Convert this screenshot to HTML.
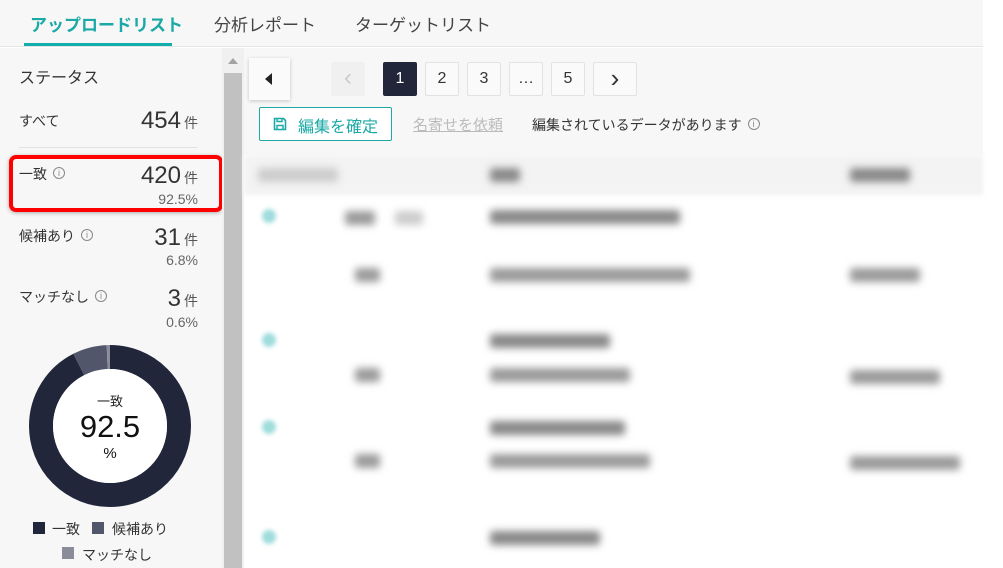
<!DOCTYPE html>
<html><head><meta charset="utf-8"><style>
*{margin:0;padding:0;box-sizing:border-box}
body{width:1003px;height:568px;overflow:hidden;background:#fff;font-family:"Liberation Sans","Noto Sans CJK JP",sans-serif;color:#333;position:relative}
.abs{position:absolute}
.tabs{left:0;top:0;width:983px;height:47px;background:#f7f7f7;border-bottom:1px solid #e4e4e4}
.tab{position:absolute;top:11px;font-size:17px;color:#444}
.left{left:0;top:48px;width:222px;height:520px;background:#f7f7f7}
.lab{font-size:14px;color:#333}
.num{font-size:24px;color:#333;text-align:right}
.num small{font-size:14px;color:#555;margin-left:3px}
.pct{font-size:14px;color:#666;text-align:right}
.info{display:inline-block;width:12px;height:12px;border:1px solid #888;border-radius:50%;font-size:9px;line-height:10px;text-align:center;color:#888;vertical-align:3px;margin-left:6px}
.pg{position:absolute;top:62px;width:34px;height:34px;border:1px solid #e2e2e2;background:#fafafa;border-radius:2px;text-align:center;line-height:32px;font-size:16px;color:#333}
.bl{position:absolute;background:#9a9a9a;filter:blur(4px);height:14px;border-radius:3px}
</style></head><body>
<div class="abs" style="left:0;top:0;width:1003px;height:568px;background:#fff"></div>
<div class="abs tabs"></div>
<div class="tab" style="left:30px;color:#1aa9a6;font-weight:bold">アップロードリスト</div>
<div class="abs" style="left:24px;top:43px;width:148px;height:3px;background:#12aeab"></div>
<div class="tab" style="left:214px">分析レポート</div>
<div class="tab" style="left:355px">ターゲットリスト</div>

<div class="abs left"></div>
<div class="abs lab" style="left:19px;top:64px;font-size:16px">ステータス</div>
<div class="abs lab" style="left:19px;top:111px">すべて</div>
<div class="abs num" style="left:100px;top:107px;width:98px">454<small>件</small></div>
<div class="abs" style="left:19px;top:147px;width:179px;height:1px;background:#e2e2e2"></div>
<div class="abs lab" style="left:19px;top:164px">一致<span class="info">i</span></div>
<div class="abs num" style="left:100px;top:162px;width:98px">420<small>件</small></div>
<div class="abs pct" style="left:100px;top:191px;width:98px">92.5%</div>
<div class="abs" style="left:9px;top:155px;width:214px;height:57px;border:4px solid #f00;border-radius:7px;box-shadow:0 1px 4px rgba(0,0,0,.3)"></div>
<div class="abs lab" style="left:19px;top:226px">候補あり<span class="info">i</span></div>
<div class="abs num" style="left:100px;top:224px;width:98px">31<small>件</small></div>
<div class="abs pct" style="left:100px;top:252px;width:98px">6.8%</div>
<div class="abs lab" style="left:19px;top:287px">マッチなし<span class="info">i</span></div>
<div class="abs num" style="left:100px;top:285px;width:98px">3<small>件</small></div>
<div class="abs pct" style="left:100px;top:314px;width:98px">0.6%</div>

<svg class="abs" style="left:0;top:330px" width="222" height="192">
<circle cx="110" cy="96" r="69" fill="none" stroke="#22263a" stroke-width="24" stroke-dasharray="401 433.5" transform="rotate(-90 110 96)"/>
<circle cx="110" cy="96" r="69" fill="none" stroke="#52566a" stroke-width="24" stroke-dasharray="0 401 29.5 433.5" transform="rotate(-90 110 96)"/>
<circle cx="110" cy="96" r="69" fill="none" stroke="#8a8c99" stroke-width="24" stroke-dasharray="0 430.5 3 433.5" transform="rotate(-90 110 96)"/>
<circle cx="110" cy="96" r="57" fill="#fff"/>
</svg>
<div class="abs" style="left:60px;top:391px;width:100px;text-align:center;font-size:13px;color:#222">一致</div>
<div class="abs" style="left:50px;top:409px;width:120px;text-align:center;font-size:31px;color:#111">92.5</div>
<div class="abs" style="left:60px;top:445px;width:100px;text-align:center;font-size:15px;color:#111">%</div>
<div class="abs" style="left:33px;top:522px;width:12px;height:12px;background:#22263a"></div>
<div class="abs lab" style="left:52px;top:519px">一致</div>
<div class="abs" style="left:92px;top:522px;width:12px;height:12px;background:#52566a"></div>
<div class="abs lab" style="left:112px;top:519px">候補あり</div>
<div class="abs" style="left:62px;top:547px;width:12px;height:12px;background:#8a8c99"></div>
<div class="abs lab" style="left:82px;top:545px">マッチなし</div>

<div class="abs" style="left:222px;top:48px;width:22px;height:520px;background:#f0f0f0"></div>
<div class="abs" style="left:224px;top:73px;width:18px;height:495px;background:#c1c1c1"></div>
<div class="abs" style="left:228px;top:58px;width:0;height:0;border-left:5px solid transparent;border-right:5px solid transparent;border-bottom:6px solid #a3a3a3"></div>

<div class="abs" style="left:244px;top:48px;width:739px;height:107px;background:#f7f7f7"></div>
<div class="abs" style="left:249px;top:58px;width:41px;height:42px;background:#fafafa;box-shadow:0 1px 4px rgba(0,0,0,.2)"></div>
<div class="abs" style="left:265px;top:73px;width:0;height:0;border-top:6px solid transparent;border-bottom:6px solid transparent;border-right:7px solid #222"></div>
<div class="pg" style="left:331px;background:#f0f0f0;border-color:#f0f0f0;color:#ccc;font-size:24px;line-height:30px">&lsaquo;</div>
<div class="pg" style="left:383px;background:#22263a;border-color:#22263a;color:#fff">1</div>
<div class="pg" style="left:425px">2</div>
<div class="pg" style="left:467px">3</div>
<div class="pg" style="left:509px;width:34px">…</div>
<div class="pg" style="left:551px">5</div>
<div class="pg" style="left:593px;width:44px;font-size:26px;line-height:30px">&rsaquo;</div>
<div class="abs" style="left:259px;top:107px;width:133px;height:34px;border:1px solid #1aa9a6;border-radius:2px;background:#fff"></div>
<svg class="abs" style="left:273px;top:117px" width="14" height="14" viewBox="0 0 14 14"><path d="M1.5 1.5h9l2 2v9h-11z" fill="none" stroke="#1aa9a6" stroke-width="1.6"/><path d="M4 1.5v3h5v-3M4 12.5v-4h6v4" fill="none" stroke="#1aa9a6" stroke-width="1.4"/></svg>
<div class="abs" style="left:298px;top:113px;font-size:16px;color:#1aa9a6">編集を確定</div>
<div class="abs" style="left:413px;top:114px;font-size:15px;color:#bbb;text-decoration:underline">名寄せを依頼</div>
<div class="abs" style="left:532px;top:115px;font-size:14px;color:#333">編集されているデータがあります<span class="info">i</span></div>

<div class="abs" style="left:244px;top:155px;width:739px;height:40px;background:#f3f3f3;filter:blur(2px)"></div>
<div class="bl" style="left:258px;top:168px;width:80px;background:#ccc"></div>
<div class="bl" style="left:490px;top:168px;width:30px;background:#888"></div>
<div class="bl" style="left:850px;top:168px;width:60px;background:#888"></div>
<div class="abs" style="left:262px;top:209px;width:14px;height:14px;border-radius:50%;background:#9fdcdc;filter:blur(2px)"></div>
<div class="bl" style="left:345px;top:211px;width:30px"></div><div class="bl" style="left:395px;top:211px;width:28px;background:#ccc"></div>
<div class="bl" style="left:490px;top:210px;width:190px;background:#888"></div>
<div class="bl" style="left:355px;top:268px;width:25px"></div><div class="bl" style="left:490px;top:268px;width:200px"></div><div class="bl" style="left:850px;top:268px;width:70px"></div>
<div class="abs" style="left:262px;top:333px;width:14px;height:14px;border-radius:50%;background:#9fdcdc;filter:blur(2px)"></div>
<div class="bl" style="left:490px;top:334px;width:120px;background:#888"></div>
<div class="bl" style="left:355px;top:368px;width:25px"></div><div class="bl" style="left:490px;top:368px;width:140px"></div><div class="bl" style="left:850px;top:370px;width:90px"></div>
<div class="abs" style="left:262px;top:420px;width:14px;height:14px;border-radius:50%;background:#9fdcdc;filter:blur(2px)"></div>
<div class="bl" style="left:490px;top:421px;width:135px;background:#888"></div>
<div class="bl" style="left:355px;top:454px;width:25px"></div><div class="bl" style="left:490px;top:454px;width:160px"></div><div class="bl" style="left:850px;top:456px;width:110px"></div>
<div class="abs" style="left:262px;top:530px;width:14px;height:14px;border-radius:50%;background:#9fdcdc;filter:blur(2px)"></div>
<div class="bl" style="left:490px;top:531px;width:110px;background:#888"></div>
</body></html>
